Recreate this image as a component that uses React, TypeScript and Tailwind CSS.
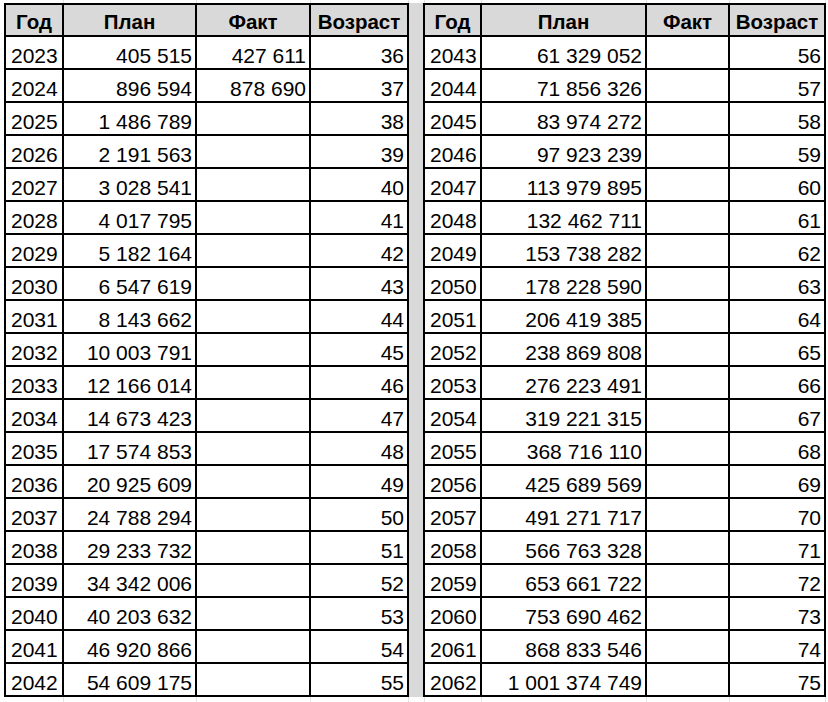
const leftRows: [string, string, string, string][] = [
  ["2023", "405 515", "427 611", "36"],
  ["2024", "896 594", "878 690", "37"],
  ["2025", "1 486 789", "", "38"],
  ["2026", "2 191 563", "", "39"],
  ["2027", "3 028 541", "", "40"],
  ["2028", "4 017 795", "", "41"],
  ["2029", "5 182 164", "", "42"],
  ["2030", "6 547 619", "", "43"],
  ["2031", "8 143 662", "", "44"],
  ["2032", "10 003 791", "", "45"],
  ["2033", "12 166 014", "", "46"],
  ["2034", "14 673 423", "", "47"],
  ["2035", "17 574 853", "", "48"],
  ["2036", "20 925 609", "", "49"],
  ["2037", "24 788 294", "", "50"],
  ["2038", "29 233 732", "", "51"],
  ["2039", "34 342 006", "", "52"],
  ["2040", "40 203 632", "", "53"],
  ["2041", "46 920 866", "", "54"],
  ["2042", "54 609 175", "", "55"],
];

const rightRows: [string, string, string, string][] = [
  ["2043", "61 329 052", "", "56"],
  ["2044", "71 856 326", "", "57"],
  ["2045", "83 974 272", "", "58"],
  ["2046", "97 923 239", "", "59"],
  ["2047", "113 979 895", "", "60"],
  ["2048", "132 462 711", "", "61"],
  ["2049", "153 738 282", "", "62"],
  ["2050", "178 228 590", "", "63"],
  ["2051", "206 419 385", "", "64"],
  ["2052", "238 869 808", "", "65"],
  ["2053", "276 223 491", "", "66"],
  ["2054", "319 221 315", "", "67"],
  ["2055", "368 716 110", "", "68"],
  ["2056", "425 689 569", "", "69"],
  ["2057", "491 271 717", "", "70"],
  ["2058", "566 763 328", "", "71"],
  ["2059", "653 661 722", "", "72"],
  ["2060", "753 690 462", "", "73"],
  ["2061", "868 833 546", "", "74"],
  ["2062", "1 001 374 749", "", "75"],
];

const headers = ["Год", "План", "Факт", "Возраст"];

// faint excel gridlines peeking above / below the bordered block
const gridSegments = [
  "w-[64px]",
  "w-[133px]",
  "w-[114px]",
  "w-[98px]",
  "w-[16px]",
  "w-[57px]",
  "w-[165px]",
  "w-[83px]",
  "w-[96px]",
];

function GridStrip({ height }: { height: string }) {
  return (
    <div className={`flex ${height}`}>
      {gridSegments.map((w, i) => (
        <div key={i} className={`${w} h-full border-r border-[#e3e3e3]`} />
      ))}
    </div>
  );
}

function Sheet({ cols, rows }: { cols: string; rows: [string, string, string, string][] }) {
  return (
    <div className={`grid ${cols} gap-[2px] bg-black p-[2px]`}>
      {headers.map((h) => (
        <div
          key={h}
          className="h-[30px] bg-[#d9d9d9] flex items-end justify-center pb-[2px] font-bold text-[20.5px] leading-[22px]"
        >
          {h}
        </div>
      ))}
      {rows.map((r) =>
        r.map((v, i) => (
          <div
            key={r[0] + i}
            className={`h-[31px] bg-white flex items-end pb-[1px] leading-[22px] whitespace-pre ${
              i === 0 ? "justify-start pl-[5px]" : "justify-end pr-[3px]"
            }`}
          >
            {v}
          </div>
        ))
      )}
    </div>
  );
}

export default function App() {
  return (
    <div
      className="w-[828px] h-[702px] bg-white text-black text-[21px] overflow-hidden"
      style={{ fontFamily: '"Liberation Sans", Arial, sans-serif' }}
    >
      <GridStrip height="h-[3px]" />
      <div className="flex pl-[4px]">
        <Sheet cols="grid-cols-[56px_131px_112px_96px]" rows={leftRows} />
        <div className="w-[14px] bg-[#d9d9d9]" />
        <Sheet cols="grid-cols-[55px_163px_81px_94px]" rows={rightRows} />
      </div>
      <GridStrip height="h-[5px]" />
    </div>
  );
}
